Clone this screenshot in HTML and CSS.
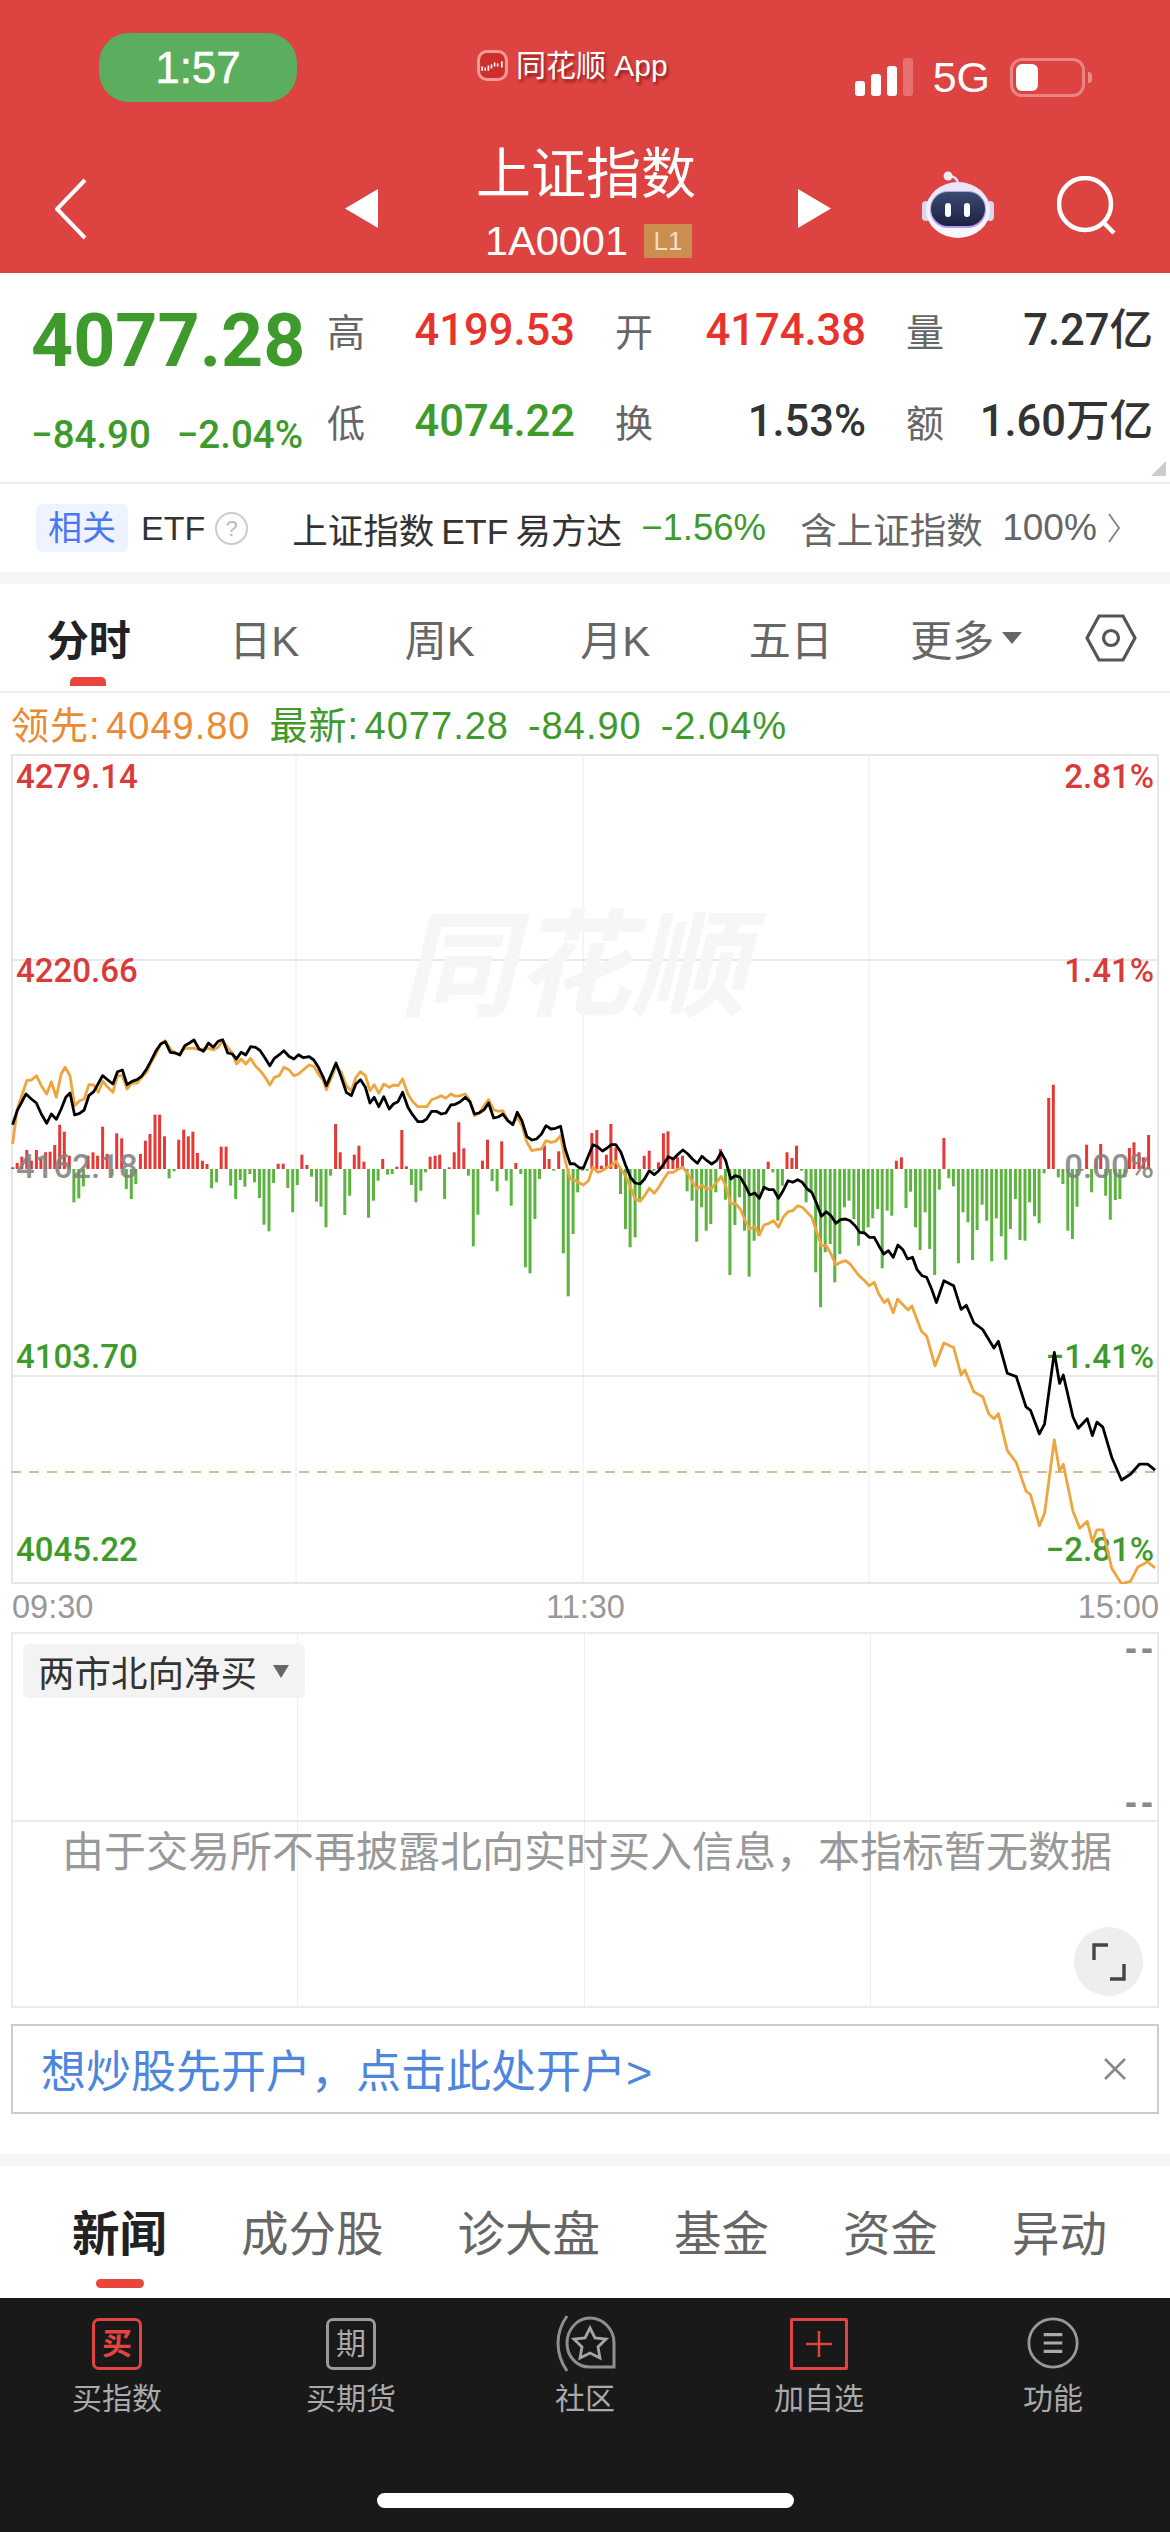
FILE: index.html
```html
<!DOCTYPE html>
<html lang="zh-CN">
<head>
<meta charset="utf-8">
<title>上证指数</title>
<link rel="stylesheet" href="styles.css">
</head>
<body>
<div class="page">
  <header class="header">
    <div class="status">
      <div class="pill">1:57</div>
      <div class="carrier">
        <svg class="app-icon" viewBox="0 0 30 30"><rect x="1.5" y="1.5" width="27" height="27" rx="8" fill="#cf2f2c" stroke="#f29a96" stroke-width="3"/><path d="M5 20v-4M8 20v-3M11 20v-5M14 14v4M17 12v4M20 13v3M24 11v6" stroke="#fff" stroke-width="1.6" fill="none"/></svg>
        <span class="carrier-name">同花顺 App</span>
      </div>
      <div class="sys">
        <div class="signal"><i class="s1"></i><i class="s2"></i><i class="s3"></i><i class="s4"></i></div>
        <span class="net">5G</span>
        <div class="battery"><i></i></div>
        <div class="nub"></div>
      </div>
    </div>
    <div class="nav">
      <svg class="back" viewBox="0 0 32 62"><path d="M30 2 2 31l28 29" fill="none" stroke="#fff" stroke-width="4"/></svg>
      <svg class="tri" viewBox="0 0 33 39"><path d="M33 0v39L0 19.5z" fill="#fff"/></svg>
      <div class="title-box">
        <div class="title">上证指数</div>
        <div class="code"><span>1A0001</span><span class="badge">L1</span></div>
      </div>
      <svg class="tri" viewBox="0 0 33 39"><path d="M0 0v39l33-19.5z" fill="#fff"/></svg>
      <svg class="robot" viewBox="0 0 72 67">
        <defs>
          <linearGradient id="face" x1="0" y1="0" x2="0" y2="1"><stop offset="0" stop-color="#3c4a70"/><stop offset="1" stop-color="#1a2342"/></linearGradient>
          <linearGradient id="shell" x1="0" y1="0" x2="0" y2="1"><stop offset="0" stop-color="#e6e6f6"/><stop offset="1" stop-color="#fbfaff"/></linearGradient>
        </defs>
        <path d="M36 12C35 6 30 5 26 5" fill="none" stroke="#e4dff2" stroke-width="2.5"/>
        <circle cx="26" cy="5" r="4.5" fill="#eeeaf8"/>
        <rect x="0" y="30" width="8" height="20" rx="4" fill="#d8d6ee"/>
        <rect x="64" y="30" width="8" height="20" rx="4" fill="#d8d6ee"/>
        <ellipse cx="36" cy="39" rx="32" ry="28" fill="url(#shell)"/>
        <rect x="8" y="20" width="56" height="37" rx="18" fill="#b79bf0"/>
        <rect x="9" y="21" width="54" height="34" rx="17" fill="url(#face)"/>
        <rect x="23" y="32" width="6" height="14" rx="3" fill="#fff"/>
        <rect x="42" y="32" width="6" height="14" rx="3" fill="#fff"/>
      </svg>
      <svg class="search" viewBox="0 0 60 60"><circle cx="28" cy="28" r="26" fill="none" stroke="#fff" stroke-width="4.5"/><path d="M47 47l10 10" stroke="#fff" stroke-width="4.5" fill="none"/></svg>
    </div>
  </header>

  <section class="quote">
    <div class="price-col">
      <div class="price">4077.28</div>
      <div class="change"><span>−84.90</span><span>−2.04%</span></div>
    </div>
    <div class="stats">
      <div class="stat"><span class="lab">高</span><span class="val red">4199.53</span></div>
      <div class="stat"><span class="lab">开</span><span class="val red">4174.38</span></div>
      <div class="stat"><span class="lab">量</span><span class="val">7.27亿</span></div>
      <div class="stat"><span class="lab">低</span><span class="val green">4074.22</span></div>
      <div class="stat"><span class="lab">换</span><span class="val">1.53%</span></div>
      <div class="stat"><span class="lab">额</span><span class="val">1.60万亿</span></div>
    </div>
    <i class="corner"></i>
  </section>

  <section class="related">
    <span class="chip">相关</span>
    <span class="etf">ETF</span>
    <span class="help">?</span>
    <span class="fund">上证指数&#8201;ETF&#8201;易方达</span>
    <span class="fund-chg">−1.56%</span>
    <span class="hold">含上证指数</span>
    <span class="pct">100%</span>
    <svg class="more" viewBox="0 0 12 30"><path d="M1 1l10 14L1 29" fill="none" stroke="#888" stroke-width="2"/></svg>
  </section>

  <div class="band"></div>

  <nav class="tabs">
    <span class="tab active">分时</span>
    <span class="tab">日K</span>
    <span class="tab">周K</span>
    <span class="tab">月K</span>
    <span class="tab">五日</span>
    <span class="tab">更多<i class="caret"></i></span>
    <svg class="hex" viewBox="0 0 52 48"><path d="M2 24 14 2h24l12 22-12 22H14z" fill="none" stroke="#555" stroke-width="3.2"/><circle cx="26" cy="24" r="7.5" fill="none" stroke="#555" stroke-width="3.2"/></svg>
  </nav>

  <div class="legend">
    <span class="lead">领先: 4049.80</span>
    <span>最新: 4077.28</span>
    <span>-84.90</span>
    <span>-2.04%</span>
  </div>

  <div class="chart">
    <svg class="plot plot-grid" viewBox="11 755 1148 830">
      <path d="M11 961H1159M11 1377H1159" stroke="#e8e8e8" stroke-width="2" fill="none"/>
      <path d="M296 755V1585M583 755V1585M869 755V1585" stroke="#ececec" fill="none"/>
      <rect x="12" y="756" width="1146" height="828" fill="none" stroke="#e6e6e6" stroke-width="2"/>
      <path d="M11 1473H1159" stroke="#d9bc94" stroke-width="2" stroke-dasharray="10 8" fill="none"/>
    </svg>
    <div class="watermark">同花顺</div>
    <span class="ax left a1 red">4279.14</span>
    <span class="ax left a2 red">4220.66</span>
    <span class="ax left a3 mid">4162.18</span>
    <span class="ax left a4 green">4103.70</span>
    <span class="ax left a5 green">4045.22</span>
    <span class="ax right a1 red">2.81%</span>
    <span class="ax right a2 red">1.41%</span>
    <span class="ax right a3 mid">0.00%</span>
    <span class="ax right a4 green">−1.41%</span>
    <span class="ax right a5 green">−2.81%</span>
    <svg id="price-chart" class="plot plot-data" viewBox="11 755 1148 830"></svg>
  </div>

  <div class="times"><span>09:30</span><span>11:30</span><span>15:00</span></div>

  <div class="sub">
    <i class="v v1"></i><i class="v v2"></i><i class="v v3"></i><i class="h"></i>
    <div class="sub-chip">两市北向净买<i class="caret sub-caret"></i></div>
    <span class="dash d1">--</span>
    <span class="dash d2">--</span>
    <div class="notice">由于交易所不再披露北向实时买入信息，本指标暂无数据</div>
    <div class="expand"><svg viewBox="0 0 34 40"><path d="M2 18V3h14M32 22v15H18" fill="none" stroke="#444" stroke-width="3.4"/></svg></div>
  </div>

  <div class="banner">
    <span class="banner-text">想炒股先开户，点击此处开户&gt;</span>
    <svg class="close" viewBox="0 0 24 24"><path d="M2 2l20 20M22 2 2 22" stroke="#888" stroke-width="2.6" fill="none"/></svg>
  </div>

  <div class="band band2"></div>

  <nav class="news">
    <span class="news-tab active">新闻</span>
    <span class="news-tab">成分股</span>
    <span class="news-tab">诊大盘</span>
    <span class="news-tab">基金</span>
    <span class="news-tab">资金</span>
    <span class="news-tab">异动</span>
  </nav>

  <footer class="bar">
    <div class="items">
      <div class="item">
        <div class="ic-box ic-red"><span>买</span></div>
        <span class="item-label">买指数</span>
      </div>
      <div class="item">
        <div class="ic-box ic-gray"><span>期</span></div>
        <span class="item-label">买期货</span>
      </div>
      <div class="item">
        <svg class="ic" viewBox="0 0 62 60"><path d="M13 3C1 20 1 40 13 58" fill="none" stroke="#8f8f8f" stroke-width="3"/><path d="M60 54H36C22 54 13 43 13 30S23 5 36 5s24 11 24 25z" fill="none" stroke="#8f8f8f" stroke-width="3"/><path d="M36 15l5 10 11 1-8 8 2 11-10-5-10 5 2-11-8-8 11-1z" fill="none" stroke="#a5a5a5" stroke-width="2.8"/></svg>
        <span class="item-label">社区</span>
      </div>
      <div class="item">
        <div class="ic-box ic-add"><svg viewBox="0 0 30 30"><path d="M15 1v28M1 15h28" stroke="#e0453f" stroke-width="2.6" fill="none"/></svg></div>
        <span class="item-label">加自选</span>
      </div>
      <div class="item">
        <div class="ic-slot"><svg class="ic-menu" viewBox="0 0 56 56"><circle cx="28" cy="28" r="26" fill="none" stroke="#999" stroke-width="3"/><path d="M18 19h20M18 28h20M18 37h20" stroke="#aaa" stroke-width="3.4" fill="none"/></svg></div>
        <span class="item-label">功能</span>
      </div>
    </div>
    <div class="home"></div>
  </footer>
</div>
<script src="chart.js"></script>
</body>
</html>
```

FILE: styles.css
```css
* { box-sizing: border-box; }
html, body { margin: 0; padding: 0; background: #fff; }
body { font-family: "Liberation Sans", "Noto Sans CJK SC", sans-serif; color: #333; }
i { font-style: normal; display: block; }
svg { display: block; }
.page { width: 1170px; height: 2532px; overflow: hidden; display: flex; flex-direction: column; }
.red { color: #e8322c; }
.green { color: #3f9a2c; }

/* header */
.header { height: 273px; background: #dd4340; color: #fff; flex: none; }
.status { height: 130px; display: flex; align-items: flex-start; padding-left: 99px; }
.pill { margin-top: 33px; width: 198px; height: 69px; border-radius: 30px; background: #5bae5e; font-size: 44px; line-height: 69px; text-align: center; -webkit-text-stroke: .5px #fff; }
.carrier { margin: 50px 0 0 180px; display: flex; align-items: center; gap: 8px; height: 31px; }
.app-icon { width: 31px; height: 31px; }
.carrier-name { font-size: 30px; line-height: 31px; text-shadow: 2px 3px 3px rgba(90, 0, 0, .55); }
.sys { margin: 58px 0 0 auto; padding-right: 78px; display: flex; align-items: flex-start; }
.signal { display: flex; align-items: flex-end; gap: 6px; height: 38px; }
.signal i { width: 10px; border-radius: 3px; background: #fff; }
.s1 { height: 15px; }
.s2 { height: 22px; }
.s3 { height: 30px; }
.signal .s4 { height: 38px; background: rgba(255, 255, 255, .25); }
.net { margin-left: 20px; font-size: 43px; line-height: 38px; }
.battery { margin-left: 20px; width: 75px; height: 39px; border: 3px solid rgba(255, 255, 255, .35); border-radius: 12px; padding: 3px; }
.battery i { width: 22px; height: 27px; border-radius: 6px; background: #fff; }
.nub { margin: 14px 0 0 3px; width: 4px; height: 11px; border-radius: 0 5px 5px 0; background: rgba(255, 255, 255, .4); }

.nav { height: 143px; display: flex; align-items: center; padding: 14px 0 0 55px; }
.back { width: 32px; height: 62px; }
.tri { width: 33px; height: 39px; flex: none; }
.nav .back + .tri { margin-left: 258px; }
.title-box { width: 420px; margin-top: -16px; display: flex; flex-direction: column; align-items: center; transform: translateX(-2px); }
.title { font-size: 55px; line-height: 60px; }
.code { margin: 20px 0 0 5px; display: flex; align-items: center; gap: 16px; font-size: 41.5px; line-height: 34px; height: 34px; }
.badge { width: 48px; height: 34px; background: #cc8d50; color: #f5dcc2; font-size: 26px; line-height: 34px; text-align: center; }
.robot { width: 72px; height: 67px; margin: -8px 0 0 91px; }
.search { width: 60px; height: 60px; margin: -6px 0 0 63px; }

/* quote */
.quote { position: relative; height: 211px; flex: none; display: flex; border-bottom: 2px solid #eee; }
.price-col { width: 327px; padding-left: 31px; }
.price { margin-top: 32px; font-family: Roboto, "Liberation Sans", sans-serif; font-size: 73.5px; font-weight: 700; line-height: 72px; color: #3f9a2c; }
.change { margin-top: 35px; display: flex; width: 272px; justify-content: space-between; font-family: Roboto, "Liberation Sans", sans-serif; font-size: 38.5px; font-weight: 500; line-height: 46px; color: #3f9a2c; }
.stats { display: grid; grid-template-columns: 248px 251px 247px; column-gap: 40px; grid-template-rows: 91px 91px; padding-top: 11px; }
.stat { display: flex; align-items: center; justify-content: space-between; }
.lab { font-size: 38px; color: #666; }
.val { font-family: Roboto, "Noto Sans CJK SC", sans-serif; font-size: 43.5px; font-weight: 500; line-height: 50px; margin-top: 2px; }
.corner { position: absolute; right: 4px; bottom: 6px; width: 0; height: 0; border-style: solid; border-width: 0 0 15px 15px; border-color: transparent transparent #ccc transparent; }

/* related */
.related { height: 88px; flex: none; display: flex; align-items: center; padding-left: 36px; font-size: 34px; }
.chip { width: 92px; height: 48px; border-radius: 6px; background: #eef3ff; color: #4a78f0; line-height: 48px; text-align: center; }
.etf { margin-left: 13px; color: #333; }
.help { margin-left: 10px; width: 33px; height: 33px; border: 2px solid #ccc; border-radius: 50%; color: #bbb; font-size: 22px; line-height: 29px; text-align: center; }
.fund { margin-left: 44px; color: #333; font-size: 35.5px; white-space: nowrap; width: 331px; }
.fund-chg { margin-left: 18px; width: 123px; color: #3f9a2c; font-size: 36.5px; white-space: nowrap; }
.hold { margin-left: 36px; width: 182px; color: #666; font-size: 36.5px; white-space: nowrap; }
.pct { margin-left: 20px; width: 95px; color: #666; font-size: 37px; }
.more { margin-left: 11px; width: 12px; height: 30px; }

.band { height: 12px; background: #f5f5f5; flex: none; }

/* period tabs */
.tabs { position: relative; height: 109px; flex: none; display: flex; align-items: center; padding: 0 0 0 1px; border-bottom: 2px solid #eee; }
.tab { width: 175.5px; text-align: center; font-size: 42px; color: #666; display: flex; justify-content: center; align-items: center; }
.tab.active { color: #222; font-weight: 700; position: relative; }
.tab.active::after { content: ""; position: absolute; left: 69px; top: 70px; width: 36px; height: 9px; border-radius: 5px 5px 0 0; background: #e8453c; }
.caret { margin-left: 8px; width: 0; height: 0; border-style: solid; border-width: 12px 10px 0; border-color: #666 transparent transparent; }
.hex { margin-left: 31px; width: 52px; height: 48px; }

.legend { height: 61px; flex: none; display: flex; align-items: baseline; gap: 19px; padding: 2px 0 0 11px; font-size: 38px; letter-spacing: 1px; word-spacing: -6px; color: #3f9a2c; white-space: nowrap; }
.lead { color: #e98b34; }

/* chart */
.chart { position: relative; margin-left: 11px; width: 1148px; height: 830px; flex: none; }
.plot { position: absolute; inset: 0; width: 1148px; height: 830px; }
.plot-data { z-index: 2; }
.watermark { position: absolute; left: 388px; top: 148px; font-size: 116px; line-height: 130px; font-weight: 700; font-style: italic; color: #f6f6f6; white-space: nowrap; }
.ax { position: absolute; z-index: 1; font-family: Roboto, "Liberation Sans", sans-serif; font-size: 33px; font-weight: 500; line-height: 36px; }
.ax.red { color: #d93a3a; }
.ax.mid { z-index: 3; color: rgba(130, 130, 130, .9); }
.left { left: 5px; }
.right { right: 5px; }
.a1 { top: 5px; }
.a2 { top: 199px; }
.a3 { top: 395px; }
.a4 { top: 585px; }
.a5 { top: 778px; }

.times { height: 48px; flex: none; display: grid; grid-template-columns: 1fr auto 1fr; align-items: center; padding: 0 11px 2px 12px; color: #999; font-size: 32.5px; }
.times span:last-child { text-align: right; }

/* sub chart */
.sub { position: relative; margin-left: 11px; width: 1148px; height: 376px; flex: none; border: 2px solid #eaeaea; }
.v { position: absolute; top: 0; bottom: 0; width: 1px; background: #eee; }
.v1 { left: 284px; }
.v2 { left: 571px; }
.v3 { left: 857px; }
.h { position: absolute; left: 0; right: 0; top: 186px; height: 2px; background: #eaeaea; }
.sub-chip { position: absolute; left: 10px; top: 10px; width: 282px; height: 54px; border-radius: 6px; background: #f3f3f3; display: flex; align-items: center; padding-left: 15px; font-size: 36.5px; color: #333; }
.sub-caret { margin-left: 16px; border-width: 13px 8px 0; }
.dash { position: absolute; right: 0; font-size: 36px; line-height: 36px; color: #888; letter-spacing: 4px; font-weight: 700; }
.d1 { top: -4px; }
.d2 { top: 150px; }
.notice { position: absolute; left: 49px; top: 191px; font-size: 42px; line-height: 56px; color: #999; white-space: nowrap; }
.expand { position: absolute; left: 1061px; top: 293px; width: 69px; height: 69px; border-radius: 50%; background: #eee; display: flex; align-items: center; justify-content: center; }
.expand svg { width: 34px; height: 40px; }

.banner { margin: 16px 0 0 11px; width: 1148px; height: 90px; flex: none; border: 2px solid #ccc; display: flex; align-items: center; justify-content: space-between; padding: 0 30px 2px 28px; }
.banner-text { font-size: 45px; color: #4d86dc; white-space: nowrap; }
.close { width: 24px; height: 24px; margin-top: 2px; }

.band2 { margin-top: 40px; }

/* news tabs */
.news { height: 132px; flex: none; display: flex; align-items: center; gap: 74px; padding: 0 0 4px 72px; }
.news-tab { position: relative; font-size: 47.5px; color: #666; white-space: nowrap; }
.news-tab.active { color: #222; font-weight: 700; }
.news-tab.active::after { content: ""; position: absolute; left: 24px; top: 83px; width: 48px; height: 9px; border-radius: 5px; background: #e8453c; }

/* bottom bar */
.bar { flex: 1; background: #191919; position: relative; }
.items { display: grid; grid-template-columns: repeat(5, 234px); padding-top: 15px; }
.item { display: flex; flex-direction: column; align-items: center; }
.ic, .ic-box, .ic-slot { height: 60px; flex: none; }
.ic { width: 62px; }
.ic-slot { padding-top: 4px; }
.ic-menu { width: 52px; height: 52px; }
.ic-box { width: 50px; margin-top: 5px; height: 52px; margin-bottom: 3px; border: 3px solid; border-radius: 7px; display: flex; align-items: center; justify-content: center; font-size: 30px; font-weight: 700; line-height: 1; }
.ic-red { border-color: #e0453f; color: #e0453f; }
.ic-gray { border-color: #999; color: #aaa; }
.ic-gray span { font-weight: 400; }
.ic-add { width: 58px; border-color: #e0453f; border-radius: 2px; }
.ic-add svg { width: 28px; height: 28px; }
.item-label { margin-top: 6px; font-size: 30px; line-height: 40px; color: #aaa; }
.home { position: absolute; left: 377px; top: 195px; width: 417px; height: 15px; border-radius: 8px; background: #fff; }
```

FILE: chart.js
```js
// Intraday chart data. Each series is sampled as x,y pairs per section of the plot.
var NS = "http://www.w3.org/2000/svg";
var svg = document.getElementById("price-chart");

function el(name, attrs) {
  var n = document.createElementNS(NS, name);
  for (var k in attrs) n.setAttribute(k, attrs[k]);
  svg.appendChild(n);
  return n;
}

var sx3 = 600 / 1568, sx4 = 600 / 1568;
function a(x, y) { return [x * sx3, 980 + y / 3]; }
function b(x, y) { return [570 + x * sx4, 980 + y / 3]; }
function c(x, y) { return [x * 1170 / 1568, 1280 + y / 2.97]; }

function mapPairs(list, fn) {
  var out = [];
  for (var i = 0; i < list.length; i += 2) out.push(fn(list[i], list[i + 1]));
  return out;
}

var barsA = [33,565,45,552,57,533,70,513,82,545,95,513,107,540,119,520,131,518,143,498,156,437,168,458,181,530,193,670,206,658,218,622,230,530,243,520,255,530,268,443,280,525,293,590,305,463,318,478,330,630,343,660,355,615,367,525,380,485,392,465,405,407,417,407,430,472,442,598,455,577,467,482,480,452,492,472,504,458,516,522,529,545,541,555,553,628,566,610,578,503,591,503,603,620,616,660,628,603,640,623,653,585,665,610,678,657,690,737,703,757,715,612,727,554,740,554,752,627,765,700,777,618,789,527,802,558,814,593,827,668,839,683,852,745,864,590,877,435,889,520,901,708,914,650,926,527,938,500,951,548,963,716,976,665,988,605,1000,540,1013,587,1025,585,1037,563,1050,453,1062,562,1075,618,1087,670,1100,635,1112,580,1124,533,1137,530,1149,527,1162,660,1174,565,1187,520,1199,430,1212,508,1224,590,1237,802,1249,707,1261,545,1274,482,1286,606,1299,637,1311,487,1323,605,1336,680,1348,552,1361,585,1373,865,1385,883,1398,720,1410,600,1423,500,1435,540,1447,575,1460,517,1472,823,1485,952];
var barsB = [8,765,20,640,33,575,45,575,57,462,70,453,82,560,95,527,107,435,120,505,132,645,145,750,157,805,170,775,182,660,194,530,207,515,219,575,231,550,244,463,256,457,269,540,281,535,294,530,306,637,319,665,331,788,344,685,356,755,368,735,381,640,393,510,406,662,418,888,431,738,443,655,456,755,468,893,481,785,493,770,506,635,518,548,530,580,543,725,555,620,567,520,580,537,592,500,605,575,617,670,630,640,642,880,655,985,667,820,680,795,692,910,705,825,717,685,729,665,742,720,754,800,767,760,779,745,791,718,804,690,816,868,829,695,841,710,853,545,866,535,878,687,890,638,903,745,915,813,928,700,940,810,953,888,965,632,977,477,990,598,1002,622,1015,853,1027,700,1040,730,1052,843,1064,753,1077,677,1089,725,1102,847,1114,718,1127,772,1139,842,1151,750,1164,660,1176,783,1189,785,1201,670,1214,712,1226,733,1239,583,1251,357,1263,317,1276,595,1288,615,1301,755,1313,780,1325,683,1338,575,1350,497,1363,640,1375,540,1387,495,1400,650,1412,722,1425,663,1437,660,1450,595,1462,507,1474,490,1487,520,1499,535,1512,468];

var blackA = [33,437,45,395,68,345,82,360,95,372,108,405,122,433,134,405,147,421,160,390,172,355,183,342,195,408,208,403,220,393,232,350,245,338,268,290,282,303,295,315,307,278,320,273,332,317,345,307,358,302,370,292,383,270,395,245,408,215,420,195,432,188,445,220,458,222,470,228,483,200,495,192,507,183,520,210,532,217,545,192,557,205,570,187,582,182,595,222,607,225,618,240,630,220,642,228,655,203,668,205,680,215,693,238,705,260,717,238,730,227,742,215,755,232,768,240,780,227,793,236,808,233,820,243,832,265,845,295,853,320,868,280,878,252,892,295,905,340,918,350,930,315,942,302,955,325,967,372,978,355,990,383,1003,353,1017,390,1028,375,1040,368,1052,340,1066,385,1078,407,1092,428,1104,428,1115,420,1128,397,1140,397,1153,405,1165,402,1178,378,1190,376,1203,368,1216,355,1228,368,1240,405,1252,402,1265,392,1277,372,1290,417,1302,414,1314,405,1327,425,1340,437,1352,400,1364,425,1377,473,1390,483,1402,480,1415,465,1427,440,1440,450,1452,448,1465,442,1477,510,1490,555];
var blackB = [0,553,12,555,25,567,35,567,48,530,60,497,72,503,85,516,97,507,108,497,120,497,133,520,145,558,158,595,170,612,183,615,195,600,207,575,220,587,232,575,245,555,257,533,270,540,283,525,295,513,308,525,320,540,333,553,345,532,358,545,370,555,383,545,395,520,407,545,420,600,432,590,445,595,458,620,470,648,483,642,495,658,507,625,520,632,532,632,545,658,557,635,570,605,582,610,595,602,607,610,620,630,632,640,645,675,657,712,670,698,682,710,695,733,707,722,720,720,732,725,745,740,757,760,770,762,782,775,795,775,807,800,820,825,832,815,845,835,857,798,870,812,882,840,895,835,907,872,920,890,932,895,945,930];
var blackC = [1255,70,1265,5,1278,20,1288,90,1295,78,1305,130,1317,150,1332,205,1338,185,1350,280,1362,290,1375,380,1381,390,1393,460,1400,430,1413,218,1420,310,1425,285,1438,410,1445,443,1457,415,1464,465,1470,425,1478,440,1490,530,1503,597,1515,580,1527,550,1538,550,1548,568];

var orangeA = [33,495,45,390,70,305,82,303,95,290,108,320,122,345,134,308,147,355,160,285,170,265,183,290,195,380,208,365,220,360,232,317,245,318,257,340,268,307,282,325,295,340,307,290,320,290,332,330,345,312,358,312,370,295,383,280,395,250,408,225,420,195,432,185,445,210,458,222,470,225,483,208,495,208,507,208,520,212,532,210,545,208,557,213,570,205,582,185,595,205,607,222,618,255,630,240,642,255,655,238,668,262,680,275,693,295,705,318,717,295,730,290,742,265,755,272,768,290,780,285,793,272,808,258,820,262,832,285,845,305,853,332,868,290,878,262,892,280,905,320,918,335,930,295,942,278,955,290,967,335,978,317,990,343,1003,315,1017,325,1028,318,1040,320,1052,300,1066,345,1078,367,1092,383,1104,383,1115,383,1128,362,1140,357,1153,350,1165,358,1178,345,1190,352,1203,350,1216,345,1228,365,1240,410,1252,402,1265,380,1277,362,1290,392,1302,397,1314,395,1327,425,1340,435,1352,415,1364,440,1377,490,1390,515,1402,512,1415,510,1427,485,1440,490,1452,487,1465,470,1477,545,1490,600];
var orangeB = [0,600,12,603,25,612,35,618,48,605,60,565,72,580,85,575,97,565,108,560,120,547,133,570,145,590,158,625,170,660,183,667,195,650,207,628,220,643,232,625,245,600,257,580,270,580,283,570,295,565,308,585,320,610,333,630,345,618,358,630,370,628,383,610,395,592,407,620,420,675,432,673,445,690,458,725,470,750,483,742,495,768,507,738,520,733,532,725,545,745,557,715,570,698,582,695,595,680,607,685,620,700,632,715,645,760,657,800,670,800,682,825,695,858,707,850,720,845,732,855,745,875,757,892,770,905,782,920,795,910,807,945];
var orangeC = [1185,70,1190,60,1197,100,1203,60,1217,92,1222,80,1235,155,1242,170,1253,258,1265,190,1278,203,1288,285,1293,270,1305,335,1317,350,1325,400,1332,415,1338,400,1350,510,1362,545,1375,630,1381,640,1393,733,1400,695,1413,478,1420,570,1425,550,1438,690,1447,740,1457,720,1464,780,1470,745,1478,745,1490,860,1503,905,1515,898,1525,855,1538,840,1548,858];

function bars(list, fn) {
  mapPairs(list, fn).forEach(function (p) {
    var up = p[1] < 1170;
    var top = Math.min(p[1], 1170), h = Math.max(Math.abs(1170 - p[1]), 1.5);
    el("rect", { x: (p[0] - 1.5).toFixed(1), y: top.toFixed(1), width: 3, height: h.toFixed(1), fill: up ? "#e53935" : "#5db33f" });
  });
}
bars(barsA, a);
bars(barsB, b);

function line(color, parts) {
  var pts = mapPairs(parts[0], a).concat(mapPairs(parts[1], b), mapPairs(parts[2], c));
  el("polyline", {
    fill: "none", stroke: color, "stroke-width": 2.8, "stroke-linejoin": "round",
    points: pts.map(function (p) { return p[0].toFixed(1) + "," + p[1].toFixed(1); }).join(" ")
  });
}
line("#eea53e", [orangeA, orangeB, orangeC]);
line("#000", [blackA, blackB, blackC]);
```
